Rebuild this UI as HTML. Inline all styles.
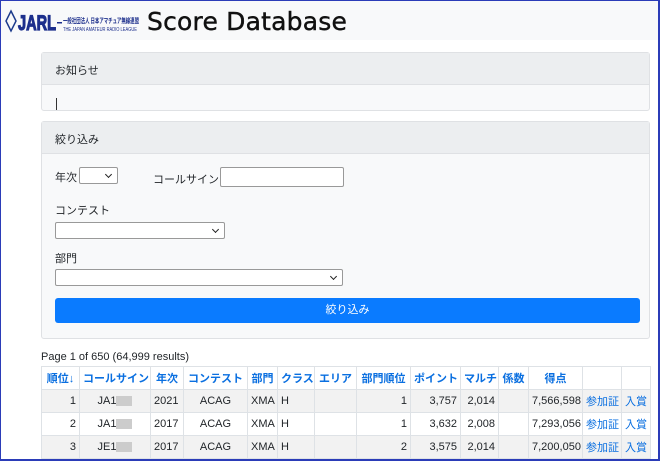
<!DOCTYPE html>
<html><head><meta charset="utf-8"><style>
*{box-sizing:border-box;margin:0;padding:0}
html,body{width:660px;height:461px;overflow:hidden}
body{background:#fff;font-family:"Liberation Sans","Noto Sans CJK JP",sans-serif;font-size:11px;color:#212529;position:relative}
.frame{position:absolute;left:0;top:0;width:660px;height:461px;border:1px solid #2b3cb8;border-right-width:2px;border-bottom-width:2px;pointer-events:none;z-index:9}
.hdr{position:absolute;left:0;top:0;width:660px;height:40px;background:#f8f9fa}
.title{position:absolute;left:147px;top:7px;font-size:25px;color:#111;font-family:"DejaVu Sans","Liberation Sans",sans-serif;letter-spacing:0.2px;-webkit-text-stroke:0.4px #111}
.card{position:absolute;left:41px;width:609px;border:1px solid #dfe1e4;border-radius:3px;background:#f8f9fa}
.ch{height:32px;background:#eceef0;border-bottom:1px solid #dfe1e4;padding:9px 13px;font-size:11px}
.abs{position:absolute}
.sel{position:absolute;background:#fff;border:1px solid #999;border-radius:2px;height:17px}
.sel:after{content:"";position:absolute;right:6px;top:4px;width:4px;height:4px;border-right:1.5px solid #222;border-bottom:1.5px solid #222;transform:rotate(45deg)}
.btn{position:absolute;left:13px;top:176px;width:585px;height:25px;background:#0a7bff;border-radius:3px;color:#fff;text-align:center;line-height:25px}
table{position:absolute;left:41px;top:366px;width:609px;table-layout:fixed;border-collapse:collapse;font-size:11px}
td,th{border:1px solid #dee2e6;height:23px;padding:0 3px;white-space:nowrap;overflow:hidden}
th{color:#0a6fe0;font-weight:bold;background:#fff}
tr.g td{background:#f2f2f2}
.r{text-align:right}.c{text-align:center}
a{color:#0a6fe0}
.blur{display:inline-block;width:16px;height:10px;background:#ccc;vertical-align:middle}
</style></head><body>
<div class="hdr"></div>
<svg class="abs" style="left:4px;top:9px" width="136" height="26" viewBox="0 0 136 26">
<path d="M7 2 L12 12 L7 22 L2 12 Z" fill="none" stroke="#1c3b8c" stroke-width="1.5"/>
<text x="14" y="21" font-family="Liberation Sans" font-weight="bold" font-size="21" fill="#1c2f8c" stroke="#1c2f8c" stroke-width="1.2" textLength="38" lengthAdjust="spacingAndGlyphs">JARL</text>
<rect x="53" y="13" width="5" height="1.5" fill="#1c2f8c"/>
<text x="59" y="14" font-family="Noto Sans CJK JP" font-size="7" fill="#1c2f8c" font-weight="bold" textLength="76" lengthAdjust="spacingAndGlyphs">一般社団法人 日本アマチュア無線連盟</text>
<text x="59" y="22" font-family="Liberation Sans" font-size="5" fill="#1c2f8c" textLength="74" lengthAdjust="spacingAndGlyphs">THE JAPAN AMATEUR RADIO LEAGUE</text>
</svg>
<div class="title">Score Database</div>

<div class="card" style="top:52px;height:59px"><div class="ch">お知らせ</div>
<div class="abs" style="left:14px;top:45px;width:1px;height:12px;background:#333"></div></div>

<div class="card" style="top:121px;height:218px"><div class="ch">絞り込み</div>
<div class="abs" style="left:13px;top:47px">年次</div>
<div class="sel" style="left:37px;top:45px;width:39px"></div>
<div class="abs" style="left:111px;top:49px">コールサイン</div>
<div class="abs" style="left:178px;top:45px;width:124px;height:20px;background:#fff;border:1px solid #999;border-radius:2px"></div>
<div class="abs" style="left:13px;top:80px">コンテスト</div>
<div class="sel" style="left:13px;top:100px;width:170px"></div>
<div class="abs" style="left:13px;top:128px">部門</div>
<div class="sel" style="left:13px;top:147px;width:288px"></div>
<div class="btn">絞り込み</div>
</div>

<div class="abs" style="left:41px;top:351px">Page 1 of 650 (64,999 results)</div>
<table>
<colgroup><col style="width:38px"><col style="width:71px"><col style="width:33px"><col style="width:64px"><col style="width:30px"><col style="width:37px"><col style="width:42px"><col style="width:54px"><col style="width:50px"><col style="width:38px"><col style="width:30px"><col style="width:54px"><col style="width:39px"><col style="width:29px"></colgroup>
<tr><th>順位↓</th><th>コールサイン</th><th>年次</th><th>コンテスト</th><th>部門</th><th>クラス</th><th>エリア</th><th>部門順位</th><th>ポイント</th><th>マルチ</th><th>係数</th><th>得点</th><th></th><th></th></tr>
<tr class="g"><td class="r">1</td><td class="c">JA1<span class="blur"></span></td><td>2021</td><td class="c">ACAG</td><td>XMA</td><td>H</td><td></td><td class="r">1</td><td class="r">3,757</td><td class="r">2,014</td><td></td><td class="r">7,566,598</td><td><a>参加証</a></td><td><a>入賞</a></td></tr>
<tr><td class="r">2</td><td class="c">JA1<span class="blur"></span></td><td>2017</td><td class="c">ACAG</td><td>XMA</td><td>H</td><td></td><td class="r">1</td><td class="r">3,632</td><td class="r">2,008</td><td></td><td class="r">7,293,056</td><td><a>参加証</a></td><td><a>入賞</a></td></tr>
<tr class="g"><td class="r">3</td><td class="c">JE1<span class="blur"></span></td><td>2017</td><td class="c">ACAG</td><td>XMA</td><td>H</td><td></td><td class="r">2</td><td class="r">3,575</td><td class="r">2,014</td><td></td><td class="r">7,200,050</td><td><a>参加証</a></td><td><a>入賞</a></td></tr>
<tr><td></td><td></td><td></td><td></td><td></td><td></td><td></td><td></td><td></td><td></td><td></td><td></td><td></td><td></td></tr>
</table>
<div class="frame"></div>
</body></html>
